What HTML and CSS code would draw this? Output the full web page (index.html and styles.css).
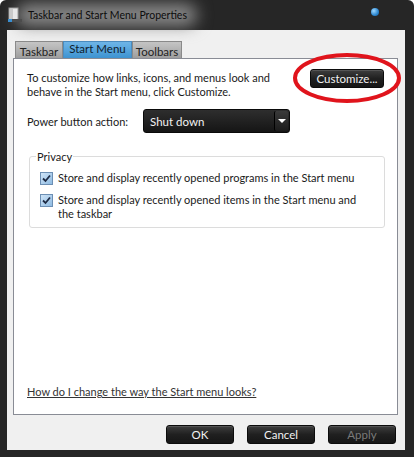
FILE: index.html
```html
<!DOCTYPE html>
<html lang="en">
<head>
    <meta charset="UTF-8">
    <meta name="viewport" content="width=device-width, initial-scale=1.0">
    <title>Taskbar and Start Menu Properties</title>
    <link rel="stylesheet" href="styles.css">
</head>
<body>
    <div class="window">
        <div class="titlebar">
            <svg class="app-icon" width="16" height="16" viewBox="0 0 16 16">
                <rect x="2" y="1" width="9" height="12" fill="#e8e8e8" stroke="#9a9a9a"/>
                <rect x="3" y="2" width="3" height="10" fill="#c9c9c9"/>
                <rect x="1" y="12" width="14" height="3" fill="#4c4c4c"/>
                <rect x="1" y="12" width="4" height="3" fill="#3a8fd0"/>
            </svg>
            <span class="title">Taskbar and Start Menu Properties</span>
            <span class="orb"></span>
        </div>

        <div class="client">
            <div class="tabs">
                <span class="tab">Taskbar</span>
                <span class="tab active">Start Menu</span>
                <span class="tab">Toolbars</span>
            </div>

            <div class="panel">
                <div class="intro">
                    <p>To customize how links, icons, and menus look and<br>behave in the Start menu, click Customize.</p>
                    <div class="highlight">
                        <button class="dark-btn customize">Customize...</button>
                        <svg class="ring" width="112" height="54" viewBox="0 0 112 54">
                            <ellipse cx="56" cy="27" rx="52" ry="23" fill="none" stroke="#e0141c" stroke-width="4"/>
                        </svg>
                    </div>
                </div>

                <div class="power">
                    <label>Power button action:</label>
                    <div class="select">
                        <span class="select-value">Shut down</span>
                        <span class="select-arrow"></span>
                    </div>
                </div>

                <fieldset class="privacy">
                    <legend>Privacy</legend>
                    <label class="check">
                        <span class="box"><svg width="9" height="9" viewBox="0 0 9 9"><path d="M1 4.5 L3.5 7 L8 1.5" fill="none" stroke="#1d2a44" stroke-width="1.8"/></svg></span>
                        <span>Store and display recently opened programs in the Start menu</span>
                    </label>
                    <label class="check">
                        <span class="box"><svg width="9" height="9" viewBox="0 0 9 9"><path d="M1 4.5 L3.5 7 L8 1.5" fill="none" stroke="#1d2a44" stroke-width="1.8"/></svg></span>
                        <span>Store and display recently opened items in the Start menu and<br>the taskbar</span>
                    </label>
                </fieldset>

                <a class="help" href="#">How do I change the way the Start menu looks?</a>
            </div>

            <div class="actions">
                <button class="dark-btn">OK</button>
                <button class="dark-btn">Cancel</button>
                <button class="dark-btn" disabled>Apply</button>
            </div>
        </div>
    </div>
</body>
</html>
```

FILE: styles.css
```css
body {
    margin: 0;
    background-color: #ffffff;
    font-family: Lato, "Noto Sans", Arial, sans-serif;
    font-size: 11px;
    color: #1a1a1a;
}

.window {
    width: 414px;
    height: 457px;
    background-color: #262626;
    border-radius: 6px 6px 0 0;
    display: flex;
    flex-direction: column;
    box-sizing: border-box;
    padding: 0 9px 7px 7px;
}

/* title bar */
.titlebar {
    height: 30px;
    display: flex;
    align-items: center;
    position: relative;
    isolation: isolate;
}

.app-icon {
    margin-right: 5px;
}

.title {
    position: relative;
    color: #0c0c0c;
    font-size: 10.5px;
}

    /* aero glow behind the caption */
    .title::before {
        content: "";
        position: absolute;
        left: -12px;
        right: -10px;
        top: -5px;
        bottom: -5px;
        background-color: #8c8c8c;
        border-radius: 14px;
        filter: blur(8px);
        z-index: -1;
    }

.orb {
    position: absolute;
    right: 26px;
    top: 8px;
    width: 8px;
    height: 8px;
    border-radius: 50%;
    background: radial-gradient(circle at 35% 35%, #9fd8ff, #2a86d0 60%, #175a96);
}

/* dialog body */
.client {
    flex: 1;
    background-color: #f0f0f0;
    display: flex;
    flex-direction: column;
    padding: 11px 7px 0 6px;
}

.tabs {
    display: flex;
    padding-left: 2px;
    height: 17px;
}

    .tabs .tab {
        box-sizing: border-box;
        width: 48px;
        text-align: center;
        line-height: 19px;
        color: #222;
        background: linear-gradient(#c6c6c6, #9e9e9e);
        border: 1px solid #8a8a8a;
        border-bottom: none;
        white-space: nowrap;
        font-size: 11.5px;
    }

    .tabs .tab.active {
        width: 69px;
        line-height: 14px;
        background: linear-gradient(#6fb6e8, #3d93d1);
        border-color: #4a8cc0;
        color: #10202e;
    }

    .tabs .tab:last-child {
        width: 50px;
    }

.panel {
    height: 357px;
    background-color: #fff;
    border: 1px solid #898c95;
    padding: 0 12px 0 13px;
    display: flex;
    flex-direction: column;
    box-sizing: border-box;
}

.intro {
    display: flex;
    justify-content: space-between;
    align-items: flex-start;
    margin-top: 12px;
}

    .intro p {
        margin: 0;
        line-height: 14px;
        white-space: nowrap;
    }

.highlight {
    position: relative;
    margin-right: 1px;
    margin-top: -2px;
}

.ring {
    position: absolute;
    left: -19px;
    top: -18px;
}

.dark-btn {
    font-family: inherit;
    font-size: 11.5px;
    color: #f2f2f2;
    background: linear-gradient(#3e3e3e, #202020 50%, #161616);
    border: 1px solid #0c0c0c;
    border-radius: 3px;
    box-shadow: inset 0 1px 0 #555;
    padding: 0;
    height: 19px;
}

    .dark-btn:disabled {
        color: #7a7a7a;
    }

.customize {
    width: 74px;
}

.power {
    display: flex;
    align-items: center;
    margin-top: 10px;
}

    .power label {
        width: 116px;
        white-space: nowrap;
    }

.select {
    width: 147px;
    height: 24px;
    box-sizing: border-box;
    background: linear-gradient(#2e2e2e, #151515);
    border: 1px solid #0a0a0a;
    border-radius: 3px;
    display: flex;
    align-items: center;
    justify-content: space-between;
    color: #f2f2f2;
    padding-left: 6px;
    font-size: 11.5px;
}

.select-arrow {
    width: 13px;
    height: 20px;
    margin-right: 1px;
    border-radius: 2px;
    background: linear-gradient(#3a3a3a, #1c1c1c);
    border-left: 1px solid #000;
    position: relative;
}

    .select-arrow::after {
        content: "";
        position: absolute;
        left: 3px;
        top: 8px;
        border-left: 4px solid transparent;
        border-right: 4px solid transparent;
        border-top: 4px solid #fff;
    }

.privacy {
    margin: 17px 0 0 2px;
    width: 356px;
    min-width: 0;
    box-sizing: border-box;
    border: 1px solid #dcdcdc;
    border-radius: 3px;
    padding: 0 10px 6px 10px;
}

    .privacy legend {
        padding: 0 1px;
        margin-left: -4px;
    }

.check {
    display: flex;
    align-items: flex-start;
    gap: 5px;
    line-height: 14px;
    margin-top: 8px;
    white-space: nowrap;
}

    .check + .check {
        margin-top: 8px;
    }

.box {
    flex: none;
    width: 11px;
    height: 11px;
    margin-top: 1px;
    border: 1px solid #6c8fb4;
    background: linear-gradient(135deg, #cfe4f7, #8fbbe2);
    display: flex;
    align-items: center;
    justify-content: center;
}

.help {
    margin-top: auto;
    margin-bottom: 16px;
    color: #333;
}

.actions {
    display: flex;
    justify-content: flex-end;
    gap: 13px;
    padding: 10px 2px 0 0;
}

    .actions .dark-btn {
        width: 68px;
        height: 19px;
    }
```
